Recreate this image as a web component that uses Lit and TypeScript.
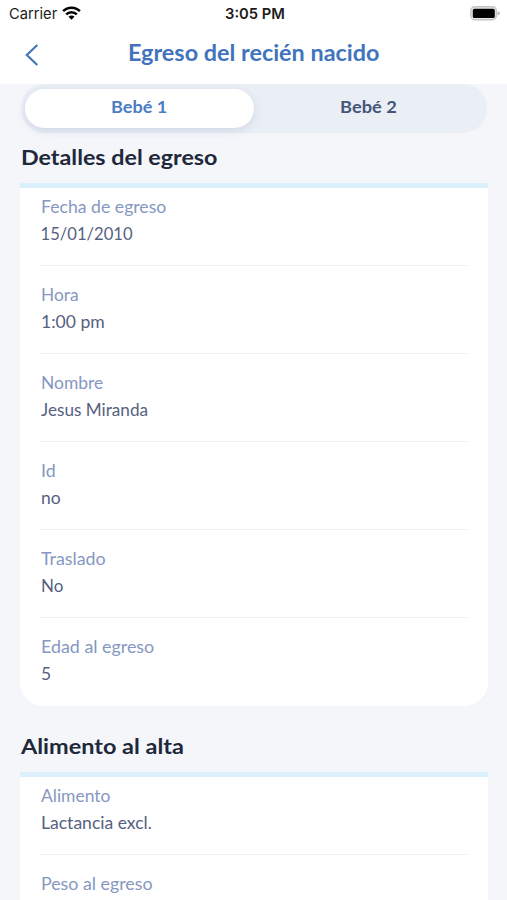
import { LitElement, html, css, nothing } from "lit";
import { customElement, property } from "lit/decorators.js";

/** A line of text stretched horizontally so that it spans a given width. */
@customElement("fit-text")
class FitText extends LitElement {
  @property() text = "";
  @property({ type: Number }) width = 0;

  static styles = css`
    :host { display: inline-block; white-space: pre; text-align: left; }
    span { display: inline-block; transform-origin: 0 50%; }
  `;

  render() {
    return html`<span>${this.text}</span>`;
  }

  updated() {
    const span = this.renderRoot.querySelector("span") as HTMLElement;
    if (!this.width) return;
    const natural = span.offsetWidth;
    this.style.width = `${this.width}px`;
    span.style.transform = `scaleX(${this.width / natural})`;
  }
}

type Line = [string, number];
interface Row { label: Line; value?: Line; }
interface Section { title: Line; rows: Row[]; }

const sections: Section[] = [
  {
    title: ["Detalles del egreso", 196],
    rows: [
      { label: ["Fecha de egreso", 125.5], value: ["15/01/2010", 92] },
      { label: ["Hora", 37.5], value: ["1:00 pm", 63.5] },
      { label: ["Nombre", 62], value: ["Jesus Miranda", 107.5] },
      { label: ["Id", 15], value: ["no", 20] },
      { label: ["Traslado", 64.5], value: ["No", 22.5] },
      { label: ["Edad al egreso", 113], value: ["5", 10.5] },
    ],
  },
  {
    title: ["Alimento al alta", 162.5],
    rows: [
      { label: ["Alimento", 69.5], value: ["Lactancia excl.", 111] },
      { label: ["Peso al egreso", 111.5] },
    ],
  },
];

const fit = ([text, width]: Line) => html`<fit-text .text=${text} .width=${width}></fit-text>`;

@customElement("app-root")
class AppRoot extends LitElement {
  static styles = css`
    :host {
      display: block;
      height: 900px;
      overflow: hidden;
      background: #f4f6fa;
      font-family: Lato, "Noto Sans", sans-serif;
    }
    * { box-sizing: border-box; }
    header { background: #fff; height: 84px; }
    .status {
      display: grid;
      grid-template-columns: 1fr auto 1fr;
      align-items: center;
      height: 28px;
      padding: 0 7px 0 9px;
      font: 15px/28px Inter, sans-serif;
      color: #1c1c1c;
    }
    .carrier { display: flex; align-items: center; gap: 5px; }
    .carrier svg { margin-top: -2px; }
    .clock { font-weight: 600; }
    .battery { justify-self: end; display: block; margin-top: -2px; }
    .nav {
      display: grid;
      grid-template-columns: 44px 1fr 44px;
      align-items: center;
      height: 52px;
      padding: 0 10px;
    }
    .back { display: block; margin: 1px 0 0 14px; }
    h1 {
      margin: -3px 0 0;
      text-align: center;
      font-size: 22px;
      line-height: 28px;
      font-weight: 700;
      color: #4273bd;
    }
    .tabs {
      display: grid;
      grid-template-columns: 1fr 1fr;
      height: 49px;
      margin: 0 20px 0 21px;
      padding: 5px 4px;
      border-radius: 24px;
      background: #eaeef5;
    }
    .tab {
      display: flex;
      justify-content: center;
      height: 39px;
      border-radius: 20px;
      font-size: 17px;
      line-height: 35px;
      font-weight: 700;
      color: #465679;
    }
    .tab.on {
      background: #fff;
      color: #4c7cc4;
      box-shadow: 0 3px 9px rgba(110, 130, 170, 0.2);
    }
    h2 {
      margin: 0 0 0 21px;
      font-size: 21.5px;
      line-height: 48px;
      height: 50px;
      font-weight: 700;
      color: #20283a;
    }
    .card {
      margin: 0 19px 0 20px;
      padding: 0 20px;
      border-top: 5px solid #daf0fb;
      border-radius: 0 0 24px 24px;
      background: #fff;
    }
    section + section { margin-top: 16px; }
    .row {
      height: 88px;
      padding: 16px 0 0 0.6px;
      border-bottom: 1px solid #edeff2;
      font-size: 16.6px;
      line-height: 27px;
    }
    .row:first-child { height: 78px; padding-top: 6px; }
    .row:last-child { border-bottom: 0; }
    .label { color: #8698c1; height: 27px; }
    .value { color: #56617f; height: 27px; }
  `;

  render() {
    return html`
      <header>
        <div class="status">
          <div class="carrier">
            ${fit(["Carrier", 48])}
            <svg width="19" height="14" viewBox="0 0 19 14" fill="none" stroke="#000" stroke-width="2.5">
              <path d="M1.1 5.2A11.8 11.8 0 0 1 17.9 5.2" />
              <path d="M4.2 8.4A7.4 7.4 0 0 1 14.8 8.4" />
              <path d="M9.5 13.8 6.5 10.8A4.2 4.2 0 0 1 12.5 10.8Z" fill="#000" stroke="none" />
            </svg>
          </div>
          <div class="clock">${fit(["3:05 PM", 60])}</div>
          <svg class="battery" width="30" height="15" viewBox="0 0 30 15">
            <rect x="0.8" y="0.8" width="25.6" height="13" rx="4" fill="#e8e8e8" stroke="#c4c4c4" stroke-width="1.4" />
            <rect x="2.8" y="2.8" width="22" height="9.2" rx="1.6" fill="#000" />
            <path d="M27.6 5.2Q29.8 6 29.8 7.3T27.6 9.4Z" fill="#b0b0b0" />
          </svg>
        </div>
        <div class="nav">
          <svg class="back" width="16" height="24" viewBox="0 0 16 24" fill="none" stroke="#4577bd" stroke-width="2.2">
            <path d="M13.3 2 2.8 12 13.3 22" />
          </svg>
          <h1>${fit(["Egreso del recién nacido", 252])}</h1>
        </div>
      </header>
      <div class="tabs">
        <div class="tab on">${fit(["Bebé 1", 56.5])}</div>
        <div class="tab">${fit(["Bebé 2", 57])}</div>
      </div>
      ${sections.map(
        (s) => html`
          <section>
            <h2>${fit(s.title)}</h2>
            <div class="card">
              ${s.rows.map(
                (r) => html`
                  <div class="row">
                    <div class="label">${fit(r.label)}</div>
                    ${r.value ? html`<div class="value">${fit(r.value)}</div>` : nothing}
                  </div>
                `
              )}
            </div>
          </section>
        `
      )}
    `;
  }
}
